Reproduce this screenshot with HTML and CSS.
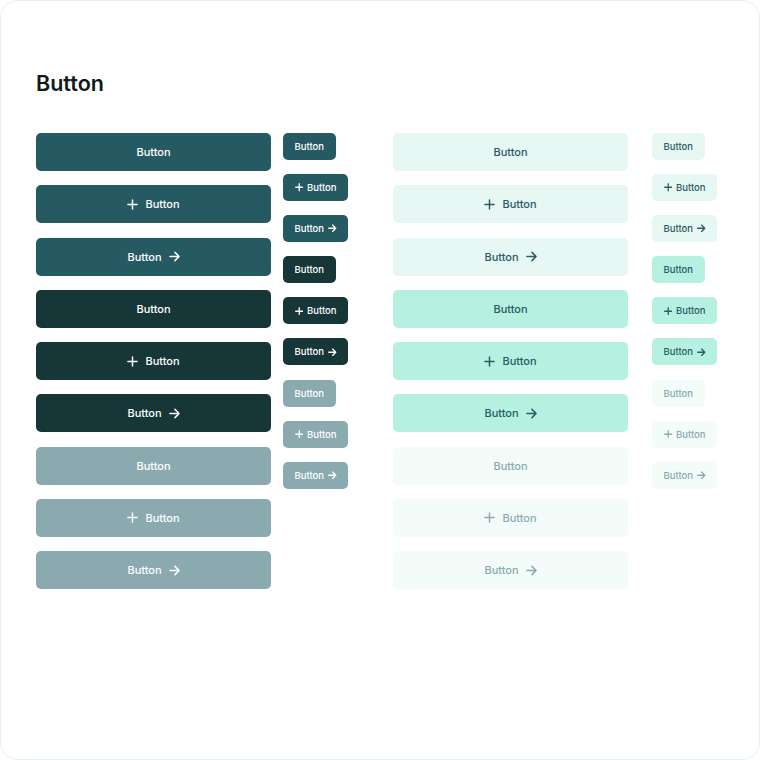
FILE: index.html
```html
<!DOCTYPE html>
<html>
<head>
<meta charset="utf-8">
<link rel="stylesheet" href="styles.css">
</head>
<body>
<div class="card">
  <h1 class="title">Button</h1>
  <div class="grid">
    <div class="col col-lg">
      <div class="btn lg primary"><span>Button</span></div>
      <div class="btn lg primary"><svg class="ic plus" viewBox="0 0 12 12"><path d="M6 1v10M1 6h10"/></svg><span>Button</span></div>
      <div class="btn lg primary"><span>Button</span><svg class="ic arrow" viewBox="0 0 12 12"><path d="M1 6h10M6.5 1.5L11 6l-4.5 4.5"/></svg></div>
      <div class="btn lg dark"><span>Button</span></div>
      <div class="btn lg dark"><svg class="ic plus" viewBox="0 0 12 12"><path d="M6 1v10M1 6h10"/></svg><span>Button</span></div>
      <div class="btn lg dark"><span>Button</span><svg class="ic arrow" viewBox="0 0 12 12"><path d="M1 6h10M6.5 1.5L11 6l-4.5 4.5"/></svg></div>
      <div class="btn lg muted"><span>Button</span></div>
      <div class="btn lg muted"><svg class="ic plus" viewBox="0 0 12 12"><path d="M6 1v10M1 6h10"/></svg><span>Button</span></div>
      <div class="btn lg muted"><span>Button</span><svg class="ic arrow" viewBox="0 0 12 12"><path d="M1 6h10M6.5 1.5L11 6l-4.5 4.5"/></svg></div>
    </div>
    <div class="col col-sm">
      <div class="btn sm primary"><span>Button</span></div>
      <div class="btn sm primary"><svg class="ic plus" viewBox="0 0 12 12"><path d="M6 1v10M1 6h10"/></svg><span>Button</span></div>
      <div class="btn sm primary"><span>Button</span><svg class="ic arrow" viewBox="0 0 12 12"><path d="M1 6h10M6.5 1.5L11 6l-4.5 4.5"/></svg></div>
      <div class="btn sm dark"><span>Button</span></div>
      <div class="btn sm dark"><svg class="ic plus" viewBox="0 0 12 12"><path d="M6 1v10M1 6h10"/></svg><span>Button</span></div>
      <div class="btn sm dark"><span>Button</span><svg class="ic arrow" viewBox="0 0 12 12"><path d="M1 6h10M6.5 1.5L11 6l-4.5 4.5"/></svg></div>
      <div class="btn sm muted"><span>Button</span></div>
      <div class="btn sm muted"><svg class="ic plus" viewBox="0 0 12 12"><path d="M6 1v10M1 6h10"/></svg><span>Button</span></div>
      <div class="btn sm muted"><span>Button</span><svg class="ic arrow" viewBox="0 0 12 12"><path d="M1 6h10M6.5 1.5L11 6l-4.5 4.5"/></svg></div>
    </div>
    <div class="col col-lg">
      <div class="btn lg light"><span>Button</span></div>
      <div class="btn lg light"><svg class="ic plus" viewBox="0 0 12 12"><path d="M6 1v10M1 6h10"/></svg><span>Button</span></div>
      <div class="btn lg light"><span>Button</span><svg class="ic arrow" viewBox="0 0 12 12"><path d="M1 6h10M6.5 1.5L11 6l-4.5 4.5"/></svg></div>
      <div class="btn lg mint"><span>Button</span></div>
      <div class="btn lg mint"><svg class="ic plus" viewBox="0 0 12 12"><path d="M6 1v10M1 6h10"/></svg><span>Button</span></div>
      <div class="btn lg mint"><span>Button</span><svg class="ic arrow" viewBox="0 0 12 12"><path d="M1 6h10M6.5 1.5L11 6l-4.5 4.5"/></svg></div>
      <div class="btn lg faint"><span>Button</span></div>
      <div class="btn lg faint"><svg class="ic plus" viewBox="0 0 12 12"><path d="M6 1v10M1 6h10"/></svg><span>Button</span></div>
      <div class="btn lg faint"><span>Button</span><svg class="ic arrow" viewBox="0 0 12 12"><path d="M1 6h10M6.5 1.5L11 6l-4.5 4.5"/></svg></div>
    </div>
    <div class="col col-sm">
      <div class="btn sm light"><span>Button</span></div>
      <div class="btn sm light"><svg class="ic plus" viewBox="0 0 12 12"><path d="M6 1v10M1 6h10"/></svg><span>Button</span></div>
      <div class="btn sm light"><span>Button</span><svg class="ic arrow" viewBox="0 0 12 12"><path d="M1 6h10M6.5 1.5L11 6l-4.5 4.5"/></svg></div>
      <div class="btn sm mint"><span>Button</span></div>
      <div class="btn sm mint"><svg class="ic plus" viewBox="0 0 12 12"><path d="M6 1v10M1 6h10"/></svg><span>Button</span></div>
      <div class="btn sm mint"><span>Button</span><svg class="ic arrow" viewBox="0 0 12 12"><path d="M1 6h10M6.5 1.5L11 6l-4.5 4.5"/></svg></div>
      <div class="btn sm faint"><span>Button</span></div>
      <div class="btn sm faint"><svg class="ic plus" viewBox="0 0 12 12"><path d="M6 1v10M1 6h10"/></svg><span>Button</span></div>
      <div class="btn sm faint"><span>Button</span><svg class="ic arrow" viewBox="0 0 12 12"><path d="M1 6h10M6.5 1.5L11 6l-4.5 4.5"/></svg></div>
    </div>
  </div>
</div>
</body>
</html>
```
FILE: styles.css
```css
* { box-sizing: border-box; }
html, body {
  margin: 0;
  padding: 0;
  background: #ffffff;
}
body {
  font-family: Inter, "Noto Sans", sans-serif;
}
.card {
  width: 760px;
  height: 760px;
  border: 1px solid #e8eeee;
  border-radius: 18px;
  background: #ffffff;
  padding: 68px 0 0 35px;
}
.title {
  margin: 0;
  font-size: 21.5px;
  line-height: 28px;
  font-weight: 600;
  color: #0f1a1a;
}
.grid {
  margin-top: 36px;
  display: flex;
  align-items: flex-start;
}
.col {
  display: flex;
  flex-direction: column;
  align-items: flex-start;
}
.col-lg { width: 235px; gap: 14.25px; }
.col-sm { width: 66px; gap: 14.1px; }
.col-lg + .col-sm { margin-left: 12px; }
.col-sm + .col-lg { margin-left: 44px; }
.col-lg:nth-child(3) + .col-sm { margin-left: 24px; }

.btn {
  display: flex;
  align-items: center;
  justify-content: center;
  font-weight: 500;
  white-space: nowrap;
}
.btn.lg {
  width: 235px;
  height: 38px;
  border-radius: 5px;
  font-size: 11px;
  gap: 7px;
}
.btn.sm {
  height: 27px;
  padding: 0 11.5px;
  border-radius: 5px;
  font-size: 9.5px;
  gap: 4px;
}
.ic {
  fill: none;
  stroke: currentColor;
  stroke-width: 1.6;
  stroke-linecap: round;
  stroke-linejoin: round;
}
.btn.lg .ic { width: 11px; height: 11px; }
.btn.sm .ic { width: 8.5px; height: 8.5px; stroke-width: 1.8; }

.primary { background: #265a63; color: #ffffff; }
.dark { background: #173638; color: #ffffff; }
.muted { background: #8aaab0; color: #ffffff; }
.light { background: #e7f8f4; color: #2b5b63; }
.mint { background: #b5f0e0; color: #2b5b63; }
.faint { background: #f3fcf9; color: #8aaab0; }
```
